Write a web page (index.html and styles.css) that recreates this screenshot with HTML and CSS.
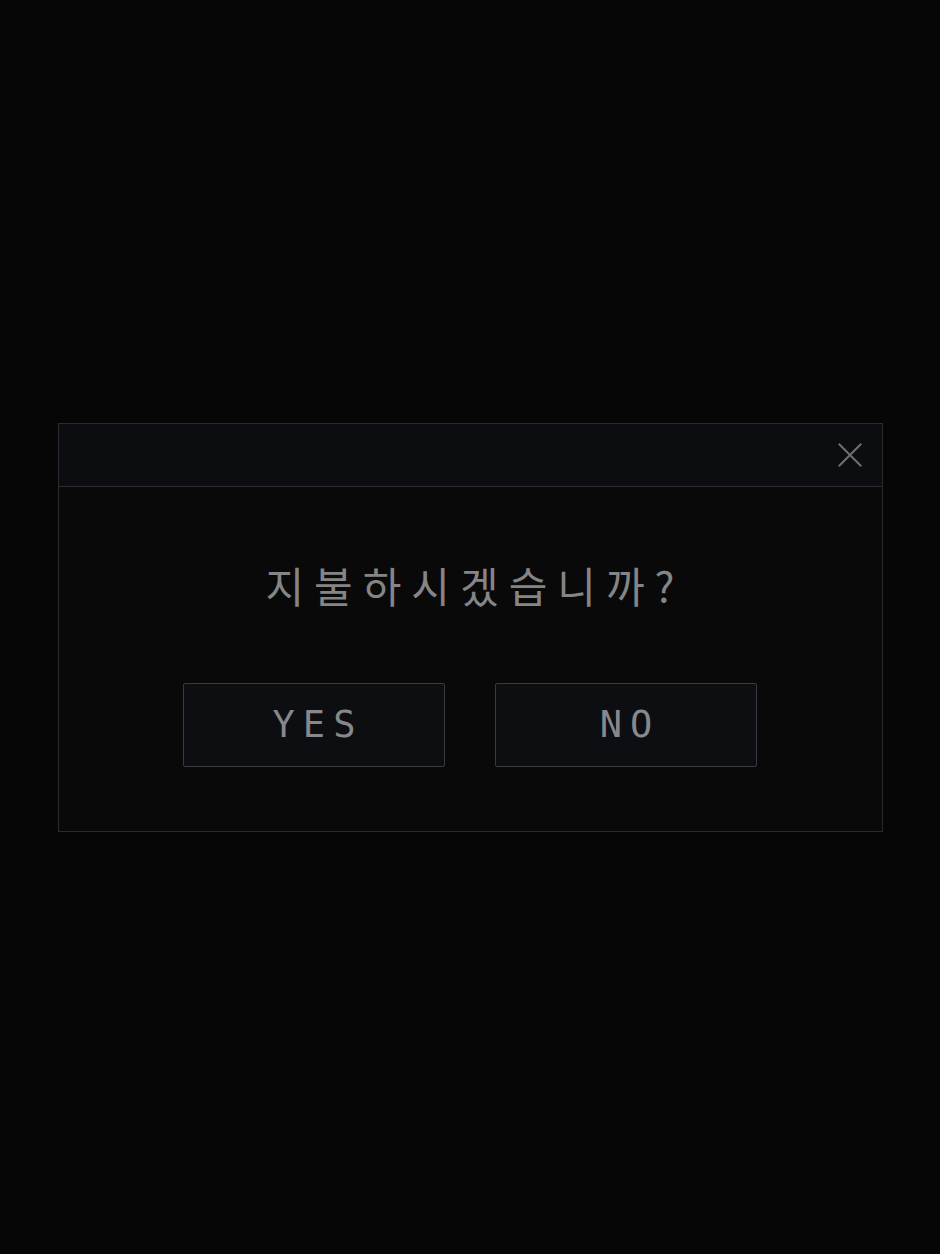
FILE: index.html
```html
<!DOCTYPE html>
<html lang="ko">
<head>
<meta charset="utf-8">
<title>지불 확인</title>
<link rel="stylesheet" href="styles.css">
</head>
<body>
<div class="screen">
  <div class="dialog" role="dialog" aria-modal="true">
    <div class="dialog-head">
      <button class="close" aria-label="닫기">
        <svg viewBox="0 0 24 24" width="24" height="24"><path d="M1.5 1.5 L22.5 22.5 M22.5 1.5 L1.5 22.5" stroke="#6f7073" stroke-width="2" fill="none" stroke-linecap="square"/></svg>
      </button>
    </div>
    <div class="dialog-body">
      <p class="question">지불하시겠습니까?</p>
      <div class="actions">
        <button class="btn">YES</button>
        <button class="btn">NO</button>
      </div>
    </div>
  </div>
</div>
</body>
</html>
```

FILE: styles.css
```css
html, body {
  margin: 0;
  padding: 0;
  background: #060606;
}

.screen {
  width: 940px;
  height: 1254px;
  display: flex;
  align-items: center;
  justify-content: center;
}

.dialog {
  width: 825px;
  height: 409px;
  box-sizing: border-box;
  border: 1px solid #2a2b2e;
  background: #09090a;
  display: flex;
  flex-direction: column;
}

.dialog-head {
  height: 62px;
  border-bottom: 1px solid #2c2d31;
  background: #0c0d10;
  display: flex;
  align-items: center;
  justify-content: flex-end;
  padding-right: 20px;
}

.close {
  width: 24px;
  height: 24px;
  padding: 0;
  border: 0;
  background: none;
  display: block;
}

.close svg {
  display: block;
}

.dialog-body {
  flex: 1;
  display: flex;
  flex-direction: column;
  align-items: center;
  padding-top: 73px;
}

.question {
  margin: 0;
  height: 50px;
  line-height: 50px;
  font-family: "Noto Sans CJK KR", "DejaVu Sans Mono", sans-serif;
  font-weight: 400;
  font-size: 42px;
  letter-spacing: 10px;
  padding-left: 10px;
  color: #858586;
}

.actions {
  margin-top: 73px;
  display: flex;
  gap: 50px;
}

.btn {
  width: 262px;
  height: 84px;
  box-sizing: border-box;
  border: 1px solid #3a3b3f;
  border-radius: 2px;
  background: #0d0e12;
  color: #88888a;
  font-family: "DejaVu Sans Mono", "Liberation Mono", monospace;
  font-size: 37px;
  letter-spacing: 8px;
  padding: 0 0 0 8px;
}
```
